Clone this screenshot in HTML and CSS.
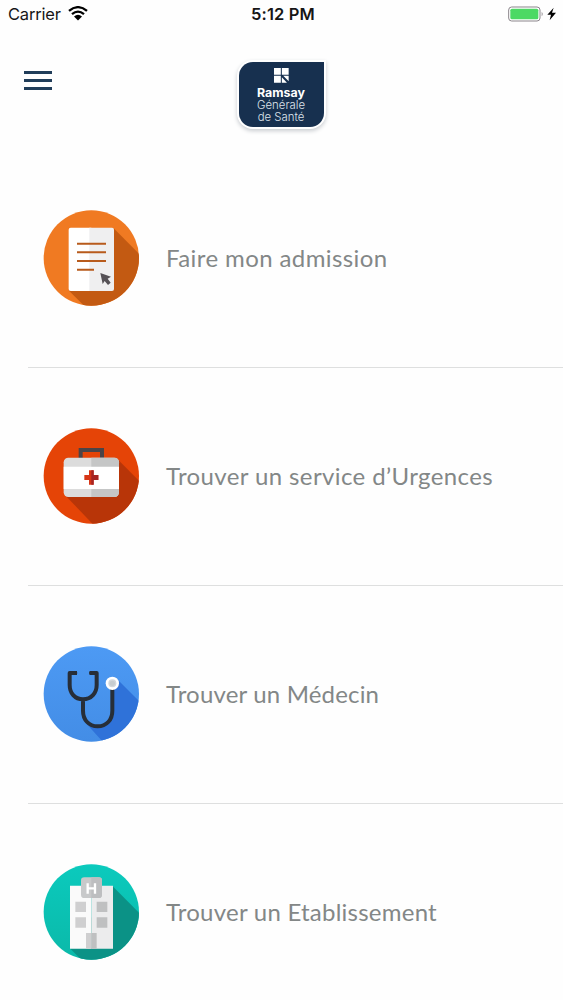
FILE: index.html
```html
<!DOCTYPE html>
<html lang="fr">
<head>
<meta charset="utf-8">
<title>Ramsay Générale de Santé</title>
<link rel="stylesheet" href="styles.css">
</head>
<body>
<div class="status">
  <div class="carrier"><span class="carrier-name">Carrier</span>
    <svg class="wifi" viewBox="0 0 60 44"><path d="M3 14Q30-8 57 14M12 24Q30 9 48 24" fill="none" stroke="#000" stroke-width="7"/><path d="M18 31Q30 21 42 31L30 43Z"/></svg>
  </div>
  <span class="time">5:12 PM</span>
  <svg class="battery" viewBox="0 0 150 48"><rect x="2" y="3" width="94" height="42" rx="9" fill="#fff" stroke="#8b858b" stroke-width="3"/><rect x="7" y="8" width="84" height="32" rx="5" fill="#4cd964"/><path d="M101 17q6 7 0 14z" fill="#8b858b"/><path d="M137 5L118 26H129L125 43L144 20H132Z"/></svg>
</div>
<header class="header">
  <div class="menu"><i></i><i></i><i></i></div>
  <div class="logo">
    <svg class="mark" viewBox="0 0 44 44"><path d="M0 0H20V20H0ZM23 0H43V20H23ZM0 23H20V43H0ZM23 27L38 43H23ZM27 23H43V39Z" fill="#fff"/></svg>
    <b>Ramsay</b><span>Générale</span><span>de Santé</span>
  </div>
</header>
<main>
  <section class="row">
    <svg class="icon" viewBox="0 0 330 330">
      <defs><clipPath id="disc"><circle cx="166" cy="165" r="143"/></clipPath></defs>
      <circle cx="166" cy="165" r="143" fill="#f07a22"/>
      <path clip-path="url(#disc)" d="M233 76L330 173V330H166L99 263Z" fill="#c35a12"/>
      <path d="M104 74H166V264H104Q98 264 98 258V80Q98 74 104 74Z" fill="#fff"/>
      <path d="M160 74H228Q234 74 234 80V258Q234 264 228 264H160Z" fill="#efeff0"/>
      <path d="M123 122H210M123 148H210M123 174H210M123 200H174" stroke="#b85b1c" stroke-width="6"/>
      <path d="M193 210L225 221L215 227L224 239L216 246L206 234L200 243Z" fill="#555156"/>
    </svg>
    <span class="label admission">Faire mon admission</span>
  </section>
  <section class="row">
    <svg class="icon" viewBox="0 0 330 330">
      <circle cx="166" cy="165" r="143" fill="#e54407"/>
      <path clip-path="url(#disc)" d="M244 114L340 210V330H190L89 224Z" fill="#b83508"/>
      <path d="M134 112V87H198V112" fill="none" stroke="#4b4447" stroke-width="12"/>
      <rect x="83" y="110" width="166" height="118" rx="14" fill="#dcdcdc"/>
      <path d="M166 110H235Q249 110 249 124V214Q249 228 235 228H166Z" fill="#c5c6c6"/>
      <path d="M83 137H249V204H83Z" fill="#fff"/>
      <path d="M159 148H173V162H187V177H173V191H159V177H145V162H159Z" fill="#d73516"/>
      <path d="M166 148H173V162H187V177H173V191H166Z" fill="#a52524"/>
    </svg>
    <span class="label urgences">Trouver un service d’Urgences</span>
  </section>
  <section class="row">
    <svg class="icon" viewBox="0 0 330 330">
      <defs><linearGradient id="blue" x2="0" y2="1"><stop stop-color="#4d9af4"/><stop offset="1" stop-color="#438de6"/></linearGradient></defs>
      <circle cx="166" cy="165" r="143" fill="url(#blue)"/>
      <path clip-path="url(#disc)" d="M243 120L330 207V330H220L150 253L190 264L228 235V145Z" fill="#2f72d9"/>
      <path d="M123 102H101V138C101 162 116 181 141 181S182 162 182 138V102H161M141 181V215C141 243 159 262 185 262S229 243 229 215V145" fill="none" stroke="#272e38" stroke-width="12" stroke-linejoin="round"/>
      <path d="M118 96Q124 96 124 102T118 108ZM166 96Q159 96 159 102T166 108Z" fill="#272e38"/>
      <circle cx="229" cy="133" r="20" fill="#fff"/><circle cx="229" cy="133" r="12" fill="#d3d8dc"/><circle cx="229" cy="133" r="8" fill="#c6ccd0"/>
    </svg>
    <span class="label medecin">Trouver un Médecin</span>
  </section>
  <section class="row last">
    <svg class="icon" viewBox="0 0 330 330">
      <defs><linearGradient id="teal" x2="0" y2="1"><stop stop-color="#0bcabd"/><stop offset="1" stop-color="#0bb9a9"/></linearGradient></defs>
      <circle cx="166" cy="165" r="143" fill="url(#teal)"/>
      <path clip-path="url(#disc)" d="M230 88L330 188V330H158L103 275Z" fill="#0b9286"/>
      <path d="M102 86H166V275H102Z" fill="#fafafa"/><path d="M166 86H231V275H166Z" fill="#ececed"/>
      <rect x="135" y="61" width="63" height="62" rx="10" fill="#c8c9ca"/>
      <path d="M166 61H188Q198 61 198 71V113Q198 123 188 123H166Z" fill="#bdbec0"/>
      <path d="M155 79V110M177 79V110M155 94H177" stroke="#fff" stroke-width="7"/>
      <path d="M118 134H150V165H118ZM118 181H150V212H118ZM150 228H166V275H150Z" fill="#cfcfd0"/>
      <path d="M182 134H214V165H182ZM182 181H214V212H182ZM166 228H182V275H166Z" fill="#bfc0c1"/>
    </svg>
    <span class="label etablissement">Trouver un Etablissement</span>
  </section>
</main>
</body>
</html>
```
FILE: styles.css
```css
* { box-sizing: border-box; }
body { margin: 0; height: 1000px; overflow: hidden; background: #fefefe; font-family: Inter, sans-serif; }
.status { height: 30px; padding: 0 5px 0 8px; display: grid; grid-template-columns: 1fr auto 1fr; align-items: center; color: #161616; font-size: 16.5px; line-height: 27px; }
.carrier { display: flex; align-items: center; gap: 7px; }
.carrier-name { letter-spacing: -.2px; padding-bottom: 1px; }
.wifi { width: 20px; height: 15px; margin-bottom: 3px; }
.time { font-weight: 600; font-size: 16.5px; letter-spacing: .15px; padding-bottom: 1px; }
.battery { justify-self: end; width: 50px; height: 16px; margin-bottom: 2px; }
.header { height: 120px; padding: 32px 25px 0 24px; display: grid; grid-template-columns: 1fr 85px 1fr; align-items: start; }
.menu { width: 28px; padding-top: 9px; display: grid; gap: 5px; }
.menu i { height: 3px; background: #203d59; }
.logo { width: 85px; height: 65px; padding-top: 6px; display: flex; flex-direction: column; align-items: center; background: #17304f; color: #dce2ea; border-radius: 14px 0 14px 14px; box-shadow: 0 0 0 2px #fff, 0 2px 4px 2px #c9ccd0; font-size: 11.4px; line-height: 12px; }
.logo b { color: #fff; font-size: 12.4px; font-weight: 700; margin-top: 4px; }
.logo span { white-space: nowrap; font-weight: 300; }
.mark { width: 15px; height: 15px; flex: none; }
.row { height: 218px; margin-left: 28px; padding-left: 8px; border-bottom: 1px solid #dedfdf; display: flex; align-items: center; }
.row.last { border-color: transparent; }
.icon { width: 110px; height: 110px; margin-bottom: 1px; flex: none; }
.label { margin-left: 20px; padding-bottom: 3px; font-family: Lato, sans-serif; font-size: 24px; color: #838787; white-space: nowrap; }
.admission { letter-spacing: .4px; }
.urgences { letter-spacing: .39px; }
.medecin { letter-spacing: .17px; }
.etablissement { letter-spacing: .24px; }
```
